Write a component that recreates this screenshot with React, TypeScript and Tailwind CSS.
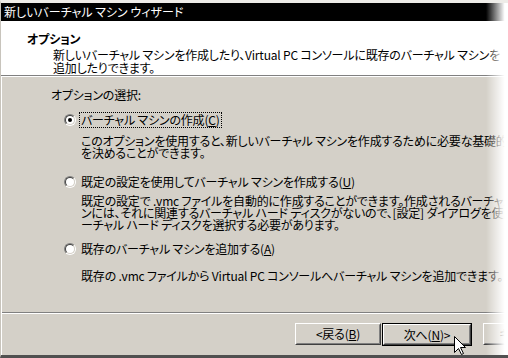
const FONT = "font-['Noto_Sans_CJK_JP',sans-serif] [font-feature-settings:'palt']"

function Radio({ checked }: { checked?: boolean }) {
  return (
    <span className="w-[12px] h-[12px] shrink-0 rounded-full border border-t-[#808080] border-l-[#808080] border-b-white border-r-white flex">
      <span className="flex-1 rounded-full border border-t-[#404040] border-l-[#404040] border-b-[#d4d0c8] border-r-[#d4d0c8] bg-white flex items-center justify-center">
        {checked && <span className="w-[4px] h-[4px] rounded-full bg-black" />}
      </span>
    </span>
  )
}

function Option({
  checked,
  label,
  desc,
  focus,
  gap,
}: {
  checked?: boolean
  label: React.ReactNode
  desc: string[]
  focus?: boolean
  gap: string
}) {
  return (
    <div>
      <div className="flex items-center h-[16px] pl-[62px]">
        <Radio checked={checked} />
        <span
          className={`ml-[3px] px-[1px] leading-[14px] whitespace-nowrap border ${focus ? "border-dotted border-black" : "border-transparent"}`}
        >
          {label}
        </span>
      </div>
      <div className={`${gap} pl-[79px] leading-[12px] whitespace-nowrap`}>
        {desc.map((line) => (
          <div key={line}>{line}</div>
        ))}
      </div>
    </div>
  )
}

function Button({ children, primary }: { children: React.ReactNode; primary?: boolean }) {
  return (
    <div className={`${primary ? "border border-black w-[90px] h-[23px]" : "w-[86px] h-[22px]"} shrink-0 flex`}>
      <div className="flex-1 flex border border-t-white border-l-white border-b-[#404040] border-r-[#404040]">
        <div className="flex-1 flex items-center justify-center border border-t-[#d4d0c8] border-l-[#d4d0c8] border-b-[#808080] border-r-[#808080] bg-[#d4d0c8] whitespace-nowrap">
          {children}
        </div>
      </div>
    </div>
  )
}

export default function App() {
  return (
    <div className={`${FONT} text-[12px] text-black w-[508px] h-[358px] relative overflow-hidden flex flex-col bg-[#d4d0c8] border-l border-l-[#c8c4bc] border-t-[3px] border-t-[#eeece8] border-b-[3px] border-b-[#505050]`}>
      {/* Title bar */}
      <div className="h-[18px] shrink-0 bg-black text-white pl-[3px] leading-[18px] whitespace-nowrap">
        新しいバーチャル マシン ウィザード
      </div>

      <div className="flex-1 flex flex-col tracking-[-0.2px]">
        {/* Header */}
        <div className="h-[54px] shrink-0 bg-white pt-[11px] whitespace-nowrap">
          <div className="pl-[26px] font-bold leading-[13px]">オプション</div>
          <div className="pl-[52px] mt-[3px] leading-[13px]">
            <div>新しいバーチャル マシンを作成したり、Virtual PC コンソールに既存のバーチャル マシンを</div>
            <div>追加したりできます。</div>
          </div>
        </div>
        <div className="h-[1px] shrink-0 bg-[#808080]" />
        <div className="h-[1px] shrink-0 bg-white" />

        {/* Body */}
        <div className="flex-1 border-l border-l-white pt-[12px] flex flex-col">
          <div className="pl-[49px] leading-[12px]">オプションの選択:</div>
          <div className="mt-[11px]">
            <Option
              checked
              focus
              gap="mt-[7px]"
              label={
                <>
                  バーチャル マシンの作成(<span className="underline">C</span>)
                </>
              }
              desc={[
                "このオプションを使用すると、新しいバーチャル マシンを作成するために必要な基礎的な情報",
                "を決めることができます。",
              ]}
            />
          </div>
          <div className="mt-[15px]">
            <Option
              gap="mt-[5px]"
              label={
                <>
                  既定の設定を使用してバーチャル マシンを作成する(<span className="underline">U</span>)
                </>
              }
              desc={[
                "既定の設定で .vmc ファイルを自動的に作成することができます。作成されるバーチャル マシ",
                "ンには、それに関連するバーチャル ハード ディスクがないので、[設定] ダイアログを使用してバ",
                "ーチャル ハード ディスクを選択する必要があります。",
              ]}
            />
          </div>
          <div className="mt-[10px]">
            <Option
              gap="mt-[13px]"
              label={
                <>
                  既存のバーチャル マシンを追加する(<span className="underline">A</span>)
                </>
              }
              desc={["既存の .vmc ファイルから Virtual PC コンソールへバーチャル マシンを追加できます。"]}
            />
          </div>
          <div className="flex-1" />
          <div className="h-[1px] bg-[#808080]" />
          <div className="h-[1px] bg-white" />
          {/* Footer */}
          <div className="h-[41px] pt-[9px] pl-[293px] flex items-start">
            <Button>
              &lt;戻る(<span className="underline">B</span>)
            </Button>
            <div className="ml-[1px]">
              <Button primary>
                次へ(<span className="underline">N</span>)&gt;
              </Button>
            </div>
            <div className="ml-[11px]">
              <Button>キャンセル</Button>
            </div>
          </div>
        </div>
      </div>

      {/* Mouse cursor */}
      <svg className="absolute left-[453px] top-[333px]" width="13" height="20" viewBox="0 0 13 20">
        <path d="M0.5 0.5 L0.5 16.5 L4.5 12.5 L7.5 18.5 L9.5 17.5 L6.5 11.5 L11.5 11.5 Z" fill="white" stroke="black" strokeWidth="1" />
      </svg>

      {/* Torn right edge fade */}
      <div className="absolute right-0 -top-[3px] -bottom-[3px] w-[22px] bg-linear-to-r from-white/0 to-white to-85%" />
    </div>
  )
}
